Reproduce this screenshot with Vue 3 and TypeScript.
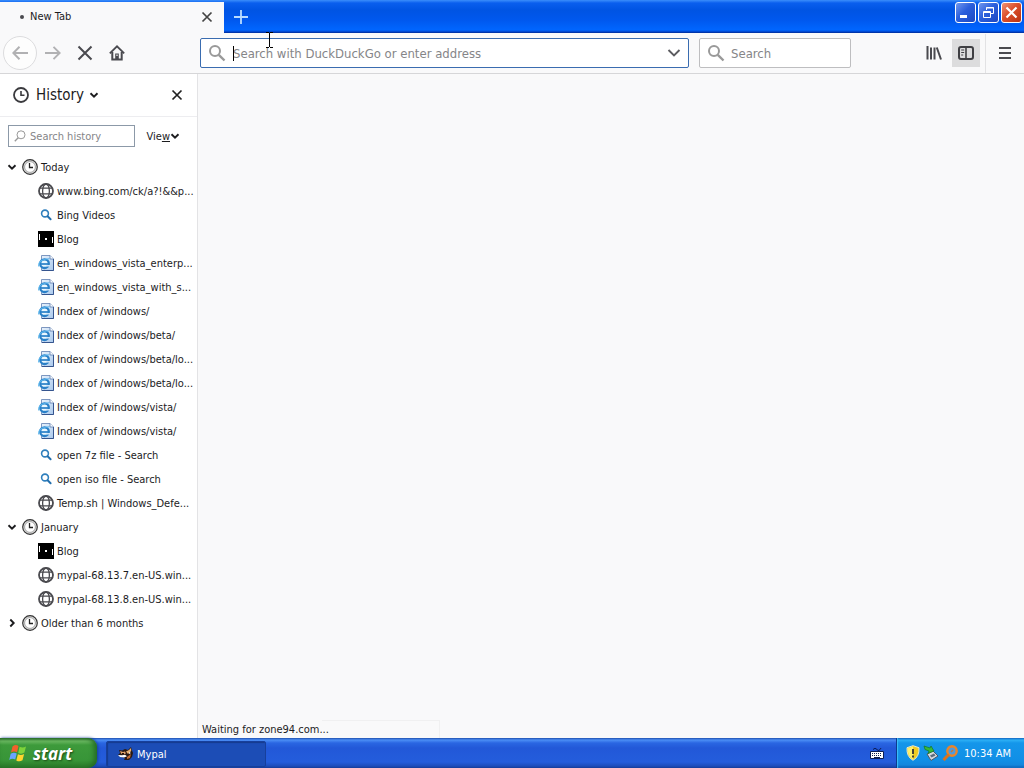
<script setup lang="ts">
import { ref } from 'vue'

type Icon = 'globe' | 'lens' | 'blog' | 'page'
interface Entry { icon: Icon; title: string }
interface Group { label: string; open: boolean; entries: Entry[] }

const groups = ref<Group[]>([
  {
    label: 'Today',
    open: true,
    entries: [
      { icon: 'globe', title: 'www.bing.com/ck/a?!&&p...' },
      { icon: 'lens', title: 'Bing Videos' },
      { icon: 'blog', title: 'Blog' },
      { icon: 'page', title: 'en_windows_vista_enterp...' },
      { icon: 'page', title: 'en_windows_vista_with_s...' },
      { icon: 'page', title: 'Index of /windows/' },
      { icon: 'page', title: 'Index of /windows/beta/' },
      { icon: 'page', title: 'Index of /windows/beta/lo...' },
      { icon: 'page', title: 'Index of /windows/beta/lo...' },
      { icon: 'page', title: 'Index of /windows/vista/' },
      { icon: 'page', title: 'Index of /windows/vista/' },
      { icon: 'lens', title: 'open 7z file - Search' },
      { icon: 'lens', title: 'open iso file - Search' },
      { icon: 'globe', title: 'Temp.sh | Windows_Defe...' },
    ],
  },
  {
    label: 'January',
    open: true,
    entries: [
      { icon: 'blog', title: 'Blog' },
      { icon: 'globe', title: 'mypal-68.13.7.en-US.win...' },
      { icon: 'globe', title: 'mypal-68.13.8.en-US.win...' },
    ],
  },
  { label: 'Older than 6 months', open: false, entries: [] },
])

const address = ref('')
const query = ref('')
const filter = ref('')
</script>

<template>
  <div class="desktop">
    <svg class="defs" width="0" height="0" aria-hidden="true">
      <linearGradient id="sheet" x1="0" y1="0" x2="1" y2="1">
        <stop offset="0" stop-color="#e8f2fc" /><stop offset="1" stop-color="#a9c8ec" />
      </linearGradient>
      <symbol id="globe" viewBox="0 0 16 16">
        <g fill="none" stroke="#4a4a4f" stroke-width="1.3">
          <circle cx="8" cy="8" r="7" stroke-width="1.8" />
          <ellipse cx="8" cy="8" rx="3.4" ry="7" />
          <path d="M2 5.2h12M2 10.8h12" />
        </g>
      </symbol>
      <symbol id="lens" viewBox="0 0 16 16">
        <circle cx="7" cy="6.5" r="3.4" fill="none" stroke="#2f7fbd" stroke-width="1.6" />
        <path d="M9.6 9.2l3 3" stroke="#2470ae" stroke-width="2" stroke-linecap="round" />
      </symbol>
      <symbol id="blog" viewBox="0 0 16 16">
        <path d="M0 0h16v16H0z" fill="#000" />
        <path d="M1.5 3v6M14.5 6v6" stroke="#fff" /><path d="M7 7h2v2H7z" fill="#fff" />
      </symbol>
      <symbol id="page" viewBox="0 0 16 16">
        <path d="M3.5.5h8.5l3.5 3.5v11.5h-12z" fill="url(#sheet)" stroke="#7d97c0" />
        <path d="M12 .5V4h3.5" fill="#fff" stroke="#5878ad" stroke-width=".8" />
        <path d="M15.5 4v11.5H4" fill="none" stroke="#36558e" />
        <circle cx="6.5" cy="8.7" r="4.3" fill="#e9f7ff" stroke="#2a80c8" stroke-width="2.3" />
        <path d="M3 9h8" stroke="#2a80c8" stroke-width="1.7" />
        <path d="M8 10.8h4" stroke="#d8eafa" stroke-width="1.5" />
        <path d="M.8 11.5C0 7 4 3.8 11.5 3.7" fill="none" stroke="#57b4ec" stroke-width="1.1" />
      </symbol>
      <symbol id="clock" viewBox="0 0 16 16">
        <circle cx="8" cy="8" r="7.3" fill="#ddd" stroke="#333" stroke-width="1.2" />
        <circle cx="8" cy="8" r="5.4" fill="#fff" stroke="#777" stroke-width=".6" />
        <path d="M7.5 4v4.5H11" fill="none" stroke="#222" stroke-width="1.3" />
      </symbol>
      <symbol id="search" viewBox="0 0 18 18">
        <circle cx="7" cy="7" r="5" fill="none" stroke="#999" stroke-width="2" />
        <path d="M10.8 10.8l5.7 5.7" stroke="#999" stroke-width="2.4" />
      </symbol>
      <symbol id="cross" viewBox="0 0 12 12">
        <path d="M1.5 1.5l9 9M10.5 1.5l-9 9" stroke="currentColor" stroke-width="1.7" />
      </symbol>
      <symbol id="down" viewBox="0 0 10 10">
        <path d="M1.5 3.3L5 6.7l3.5-3.4" fill="none" stroke="currentColor" stroke-width="1.9" />
      </symbol>
    </svg>

    <header class="titlebar">
      <div class="tab">
        <span class="dot"></span>
        <span class="tab-label">New Tab</span>
        <button class="plain tab-close" aria-label="Close tab"><svg width="12" height="12"><use href="#cross" /></svg></button>
      </div>
      <button class="plain new-tab" aria-label="New tab">
        <svg width="14" height="14" viewBox="0 0 14 14"><path d="M7 0v14M0 7h14" stroke="#b9dcff" stroke-width="1.8" /></svg>
      </button>
      <div class="window-buttons">
        <button class="winbtn" aria-label="Minimize"><svg width="19" height="19"><path d="M4 12h7v3H4z" fill="#fff" /></svg></button>
        <button class="winbtn" aria-label="Restore">
          <svg width="19" height="19" fill="none" stroke="#fff"><path d="M7.5 7V4.5h7v6H12M7 5h8" /><path d="M4.5 8.5h7v6h-7zM4 9.5h8" /></svg>
        </button>
        <button class="winbtn close" aria-label="Close"><svg width="19" height="19"><path d="M4.5 4.5l10 10M14.5 4.5l-10 10" stroke="#fff" stroke-width="2.2" /></svg></button>
      </div>
    </header>

    <nav class="toolbar">
      <div class="nav-buttons">
        <button class="plain back" aria-label="Back">
          <svg width="16" height="16" viewBox="0 0 16 16"><path d="M16 8H1.5M7.5 1.8L1.3 8l6.2 6.2" fill="none" stroke="#b1b1b3" stroke-width="2" /></svg>
        </button>
        <button class="plain tool" aria-label="Forward">
          <svg width="16" height="16" viewBox="0 0 16 16"><path d="M0 8h14.5M8.5 1.8L14.7 8l-6.2 6.2" fill="none" stroke="#b1b1b3" stroke-width="1.9" /></svg>
        </button>
        <button class="plain tool" aria-label="Stop">
          <svg width="16" height="16" viewBox="0 0 16 16"><path d="M1.5 1.5l13 13M14.5 1.5l-13 13" stroke="#4a4a4f" stroke-width="2" /></svg>
        </button>
        <button class="plain tool" aria-label="Home">
          <svg width="16" height="16" viewBox="0 0 16 16"><path d="M.8 8.3L8 1.3l7.2 7" fill="none" stroke="#4a4a4f" stroke-width="1.8" /><path d="M3.3 7v7.5h9.4V7" fill="none" stroke="#4a4a4f" stroke-width="2" /><path d="M6.2 8.5h3.6V15H6.2z" fill="#4a4a4f" /><path d="M8 9.5v1.5" stroke="#fff" stroke-width="1.2" /></svg>
        </button>
      </div>
      <div class="field address">
        <svg width="18" height="18"><use href="#search" /></svg>
        <span class="entry">
          <input v-model="address" type="text" aria-label="Address" placeholder="Search with DuckDuckGo or enter address" />
          <span class="caret"></span>
        </span>
        <button class="plain drop" aria-label="Show history"><svg width="14" height="10" viewBox="0 0 14 10"><path d="M1.5 2L7 7.5 12.5 2" fill="none" stroke="#5c5c60" stroke-width="1.9" /></svg></button>
      </div>
      <div class="field websearch">
        <svg width="18" height="18"><use href="#search" /></svg>
        <input v-model="query" type="text" aria-label="Search" placeholder="Search" />
      </div>
      <div class="actions">
        <button class="plain action" aria-label="Library">
          <svg width="16" height="16" viewBox="0 0 16 16"><path d="M1.5 1v13.5M5 2.5v12M8.5 2.5v12M10.8 2.5l4.2 12" fill="none" stroke="#4a4a4f" stroke-width="2" /></svg>
        </button>
        <button class="plain action on" aria-label="Sidebars">
          <svg width="16" height="16" viewBox="0 0 16 16"><rect x="1" y="2" width="14" height="12" rx="2" fill="none" stroke="#3f3f43" stroke-width="2" /><path d="M8 2v12" stroke="#3f3f43" stroke-width="1.6" /><path d="M3.2 5h3M3.2 7.5h3M3.2 10h2" stroke="#3f3f43" /></svg>
        </button>
        <span class="divider"></span>
        <button class="plain action" aria-label="Menu">
          <svg width="14" height="14" viewBox="0 0 14 14"><path d="M1 2h12M1 7h12M1 12h12" stroke="#4a4a4f" stroke-width="1.9" /></svg>
        </button>
      </div>
    </nav>

    <div class="body">
      <aside class="sidebar">
        <div class="side-head">
          <button class="plain side-title">
            <svg width="16" height="16" viewBox="0 0 16 16"><circle cx="8" cy="8" r="7" fill="none" stroke="#3a3a3e" stroke-width="1.8" /><path d="M8 4v4.3h3.5" fill="none" stroke="#3a3a3e" stroke-width="1.6" /></svg>
            <span>History</span>
            <svg width="10" height="10"><use href="#down" /></svg>
          </button>
          <button class="plain side-close" aria-label="Close sidebar"><svg width="12" height="12"><use href="#cross" /></svg></button>
        </div>
        <div class="side-search">
          <div class="filter">
            <svg width="12" height="12" viewBox="0 0 12 12"><circle cx="7" cy="4.8" r="4" fill="none" stroke="#999" /><path d="M4.2 7.7L.8 11.2" stroke="#999" stroke-width="1.3" /></svg>
            <input v-model="filter" type="text" aria-label="Search history" placeholder="Search history" />
          </div>
          <button class="plain view"><span>Vie<u>w</u></span><svg width="10" height="10"><use href="#down" /></svg></button>
        </div>
        <ul class="tree">
          <li v-for="group in groups" :key="group.label">
            <button class="plain row" :aria-expanded="group.open" @click="group.open = !group.open">
              <svg class="twisty" :class="{ shut: !group.open }" width="10" height="10"><use href="#down" /></svg>
              <svg width="16" height="16"><use href="#clock" /></svg>
              <span>{{ group.label }}</span>
            </button>
            <ul v-if="group.open">
              <li v-for="(entry, i) in group.entries" :key="i">
                <a class="row leaf" href="#">
                  <svg width="16" height="16"><use :href="'#' + entry.icon" /></svg>
                  <span>{{ entry.title }}</span>
                </a>
              </li>
            </ul>
          </li>
        </ul>
      </aside>
      <main class="page">
        <div class="status"><span>Waiting for zone94.com...</span></div>
      </main>
    </div>

    <footer class="taskbar">
      <button class="start">
        <svg width="20" height="20" viewBox="0 0 20 20">
          <path d="M3.5 3.5Q6.5 1 9.5 3L8 9.3Q5 7.5 2 9.5z" fill="#f2602c" />
          <path d="M10.6 3.8q3.2 1.5 6.4-.4l-1.6 6.2q-3 2-6.2.3z" fill="#7ed33b" />
          <path d="M1.7 10.8q3-2 6-.3L6.2 16.6q-3-1.6-6 .3z" fill="#6aa4ff" />
          <path d="M8.9 11.2q3 1.7 6.2-.2l-1.6 6.2q-3 2-6.2.2z" fill="#ffd52e" />
        </svg>
        <span>start</span>
      </button>
      <button class="task">
        <svg width="16" height="16" viewBox="0 0 16 16">
          <path d="M1 4l3 .5L7 3l3 1 3-3 .8 3L15 7l-1 4-3 3H6l1-2-4-1-3-2 2-2z" fill="#2b1a12" />
          <path d="M2 5l3 1 2-.5 1 2-3 1-2-1z" fill="#e0a066" />
          <path d="M8 5.500l3-1.500 2-2 .2 3L10 8z" fill="#e8b071" />
          <path d="M0 9l4 .3 3-.6 2 1.500-3 1.400-4-.7zM11 6l2 1-2 1z" fill="#fff" />
          <path d="M9 11l4-3-1 4-3 1z" fill="#c56c34" />
          <path d="M4 7h2v1.500H4z" fill="#1a0d08" />
        </svg>
        <span>Mypal</span>
      </button>
      <button class="plain keyboard" aria-label="Keyboard">
        <svg width="14" height="14" viewBox="0 0 14 14"><path d="M3 3.5q2-2.5 4 0t4-1.5" fill="none" stroke="#0b1d55" /><path d="M.5 5.5h13v7H.5z" fill="#fff" stroke="#0b1d55" /><path d="M2 7.5h10M2 9.5h10" stroke="#14224f" stroke-dasharray="1 1" /><path d="M4 11.5h6" stroke="#14224f" /></svg>
      </button>
      <div class="tray">
        <svg width="16" height="16" viewBox="0 0 16 16"><path d="M8 .7l6 2q.6 9-6 12.6Q1.4 11.7 2 2.7z" fill="#f0cc22" stroke="#e6e8d0" /><path d="M8 1.5v13Q2.5 11 2.7 3.2z" fill="#fff06a" /><path d="M8 4v5M8 10.5v2" stroke="#333" stroke-width="1.8" /></svg>
        <svg width="16" height="16" viewBox="0 0 16 16"><path d="M4 9l6-3 5 5-7 4.500z" fill="#d5dae0" stroke="#4d5865" /><path d="M7 10.500l4-2 1.500 2-4 2z" fill="#5c6b7c" /><path d="M1 1l6 2 1-2 3 5-6 2.500 1-2.500L2 4.500z" fill="#38b936" stroke="#14752a" stroke-width=".7" /></svg>
        <svg width="18" height="16" viewBox="0 0 18 16"><circle cx="11" cy="6" r="4.7" fill="#4d9ade" stroke="#e8852a" stroke-width="2.4" /><path d="M7.8 9.5L2.5 15" stroke="#d87420" stroke-width="3.2" /><path d="M10 7l2-2" stroke="#c9772f" stroke-width="1.5" /></svg>
        <time>10:34 AM</time>
      </div>
    </footer>

    <svg class="pointer" width="7" height="16" viewBox="0 0 7 16" aria-hidden="true">
      <path d="M0 .5h3M4 .5h3M3.5 1v14M0 15.5h3M4 15.5h3" fill="none" stroke="#000" />
    </svg>
  </div>
</template>

<style>
html, body { margin: 0; height: 100%; }
</style>

<style scoped>
.desktop {
  position: relative;
  display: flex;
  flex-direction: column;
  min-height: 100vh;
  overflow: hidden;
  background: #f9f9fa;
  color: #1c1c1e;
  font-family: "DejaVu Sans Condensed", "Noto Sans", sans-serif;
  font-size: 11px;
}
.desktop * { box-sizing: border-box; }
.defs { position: absolute; }
svg { display: block; flex: none; }
button, input { font: inherit; color: inherit; }
button { cursor: default; }
.plain { display: flex; align-items: center; justify-content: center; padding: 0; border: 0; background: none; }
input { flex: 1; min-width: 0; width: 100%; padding: 0; border: 0; outline: 0; background: none; }
input::placeholder { color: #858588; opacity: 1; }
ul { margin: 0; padding: 0; list-style: none; }

.titlebar {
  display: flex;
  height: 33px;
  background: linear-gradient(#3b8efb 0, #0a5fee 3px, #0054e3 10px, #0058ee 20px, #0066ff 30px, #003fc4 32px, #002a91 33px);
}
.tab { display: flex; align-items: center; width: 224px; margin-top: 2px; padding: 0 11px 2px 20px; background: #f9f9fa; }
.dot { width: 4px; height: 4px; margin-right: 6px; border-radius: 50%; background: #4a4a4f; }
.tab-label { flex: 1; }
.tab-close { color: #444; }
.new-tab { width: 34px; }
.window-buttons { display: flex; gap: 2px; margin: 2px 2px 0 auto; }
.winbtn {
  width: 21px; height: 21px; padding: 0; border: 1px solid #fff; border-radius: 3px;
  background: linear-gradient(135deg, #7197ee, #2b5fdc 45%, #1c48c2);
}
.winbtn.close { background: linear-gradient(135deg, #ee9377, #dc4f2b 45%, #b93313); }

.toolbar { display: flex; align-items: center; height: 41px; padding-right: 5px; border-bottom: 1px solid #d6d6d8; background: #f9f9fa; }
.nav-buttons { display: flex; align-items: center; width: 200px; padding-left: 3px; }
.back { width: 34px; height: 34px; border: 1px solid #dcdcde; border-radius: 50%; background: #fdfdfd; }
.tool { width: 32px; height: 32px; }
.field { display: flex; align-items: center; height: 30px; padding-left: 7px; border: 1px solid #bebec0; border-radius: 2px; background: #fff; font-size: 13px; }
.field input { margin-left: 6px; }
.address { flex: 1; border-color: #3a6cb0; }
.address input { margin-left: 0; }
.entry { position: relative; display: flex; flex: 1; margin-left: 7px; }
.caret { position: absolute; left: 0; top: 0; width: 1px; height: 15px; background: #000; }
.drop { width: 28px; height: 28px; }
.websearch { width: 152px; margin-left: 10px; }
.actions { display: flex; align-items: center; margin-left: 69px; }
.action { width: 28px; height: 28px; margin-right: 4px; }
.action.on { background: #dcdcdd; }
.divider { width: 1px; height: 39px; margin: 0 5px 0 1px; background: #e2e2e4; }
.action:last-child { margin-right: 0; }

.body { display: flex; flex: 1; }
.sidebar { width: 198px; border-right: 1px solid #e3e3e5; background: #fff; }
.side-head { display: flex; align-items: center; justify-content: space-between; height: 43px; padding: 0 14px 0 13px; border-bottom: 1px solid #ededf0; }
.side-title { gap: 7px; font-size: 15px; }
.side-title svg:last-child { margin-left: -2px; }
.side-close { color: #222; }
.side-search { display: flex; align-items: center; padding: 8px 17px 8px 8px; }
.filter { display: flex; align-items: center; gap: 4px; width: 127px; height: 22px; padding: 0 5px; border: 1px solid #8c99a8; background: #fff; }
.view { flex: 1; justify-content: flex-end; }
.row { display: flex; justify-content: flex-start; align-items: center; width: 100%; height: 24px; padding-left: 7px; color: inherit; text-decoration: none; white-space: nowrap; }
.row span { margin-left: 3px; }
.twisty { margin-right: 5px; }
.twisty.shut { transform: rotate(-90deg); }
.leaf { padding-left: 38px; }
.page { display: flex; flex: 1; align-items: flex-end; background: #f9f9fa; }
.status { width: 242px; height: 18px; border: 1px solid #f0f0f1; border-width: 1px 1px 0 0; }
.status span { display: block; width: 124px; padding-left: 4px; line-height: 19px; margin-top: -1px; background: #f9f9fa; white-space: nowrap; }

.taskbar {
  display: flex;
  height: 30px;
  color: #fff;
  background: linear-gradient(#1f4fae 0, #4b8ef5 2px, #2a66e2 5px, #2258d8 10px, #245ddc 24px, #1d4dbb 28px, #153c98 30px);
}
.start {
  display: flex; align-items: center; gap: 4px; width: 97px; padding: 0 0 0 9px; border: 0; border-radius: 0 9px 9px 0;
  color: #fff; font: italic bold 17px "Open Sans", "Noto Sans", sans-serif; text-shadow: 1px 1px 2px #1a4a14;
  background: linear-gradient(#2c6e2c 0, #6cbb63 3px, #3d9a3b 7px, #389538 22px, #2a7a29 30px);
  box-shadow: inset -3px 0 5px #246b24, 1px 0 3px #174096;
}
.task {
  display: flex; align-items: center; gap: 3px; width: 160px; height: 26px; margin: 3px auto 0 9px; padding: 0 11px;
  border: 1px solid #173f9b; border-radius: 2px; color: #fff; background: #1c4db6; box-shadow: inset 1px 1px 1px #163b8d;
}
.keyboard { width: 20px; margin-right: 9px; }
.tray {
  display: flex; align-items: center; gap: 2px; padding: 0 13px 0 8px; border-left: 1px solid #0d3b8e;
  background: linear-gradient(#0c59b9 0, #2cb0f5 2px, #1496ea 5px, #118fe6 22px, #1487dd 27px, #0b5fb5 30px);
  box-shadow: inset 1px 0 1px #3fc1fb;
}
.tray time { margin-left: 3px; }
.pointer { position: absolute; left: 266px; top: 32px; }
</style>
